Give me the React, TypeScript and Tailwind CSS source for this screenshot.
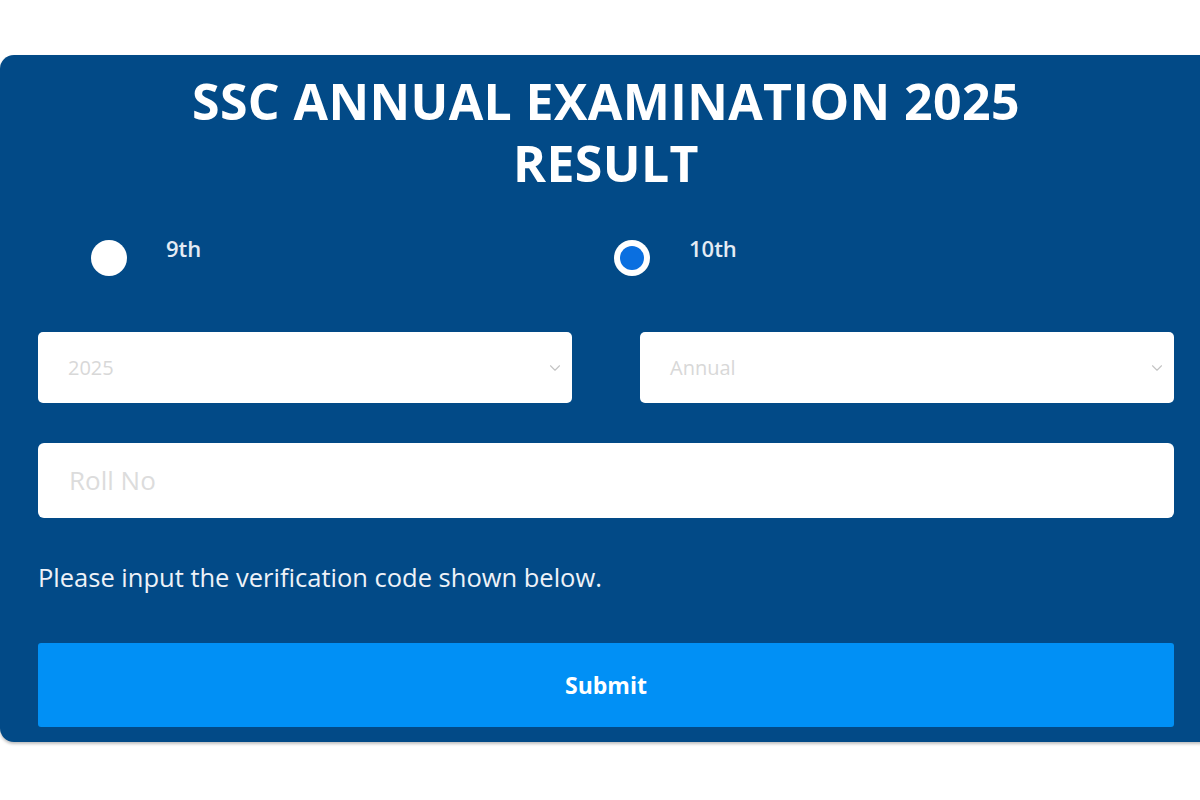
import { ChevronDown } from 'lucide-react';

const font = { fontFamily: '"Open Sans", "Noto Sans", sans-serif' };

function Radio({ label, checked }: { label: string; checked?: boolean }) {
  return (
    <label className="flex items-start">
      <span className="mt-[7px] flex h-[36px] w-[36px] items-center justify-center rounded-full bg-white">
        {checked && <span className="h-[24px] w-[24px] rounded-full bg-[#0a6fe0]" />}
      </span>
      <span className="ml-[39px] text-[22px] font-semibold leading-[30px] text-[#e4ebf4]">{label}</span>
    </label>
  );
}

function Select({ value }: { value: string }) {
  return (
    <div className="flex h-[71px] flex-1 items-center justify-between rounded-[5px] bg-white pl-[30px] pr-[8px]">
      <span className="text-[20px] text-[#d8d8d8]">{value}</span>
      <ChevronDown className="h-[18px] w-[18px] text-[#c4c4c4]" strokeWidth={1.5} />
    </div>
  );
}

export default function App() {
  return (
    <div className="min-h-screen overflow-hidden bg-white pt-[55px]" style={font}>
      <div className="w-[1212px] rounded-l-[14px] bg-[#024a87] px-[38px] pb-[15px] pt-[15px] shadow-[0_2px_3px_rgba(0,0,0,0.25)]">
        <h1 className="text-center text-[50px] font-bold leading-[62px] tracking-[0.4px] text-white">
          SSC ANNUAL EXAMINATION 2025
          <br />
          RESULT
        </h1>

        <div className="mt-[39px] flex">
          <div className="w-[576px] pl-[53px]">
            <Radio label="9th" />
          </div>
          <div>
            <Radio label="10th" checked />
          </div>
        </div>

        <div className="mt-[56px] flex gap-[68px]">
          <Select value="2025" />
          <Select value="Annual" />
        </div>

        <div className="mt-[40px] flex h-[75px] items-center rounded-[6px] bg-white pl-[31px]">
          <span className="text-[26px] text-[#dcdcdc]">Roll No</span>
        </div>

        <p className="mt-[40px] text-[25.5px] text-[#eef2f8]">Please input the verification code shown below.</p>

        <button className="mt-[47px] flex h-[84px] w-full items-center justify-center rounded-[3px] bg-[#0190f5] text-[23px] font-bold text-white">
          Submit
        </button>
      </div>
    </div>
  );
}
